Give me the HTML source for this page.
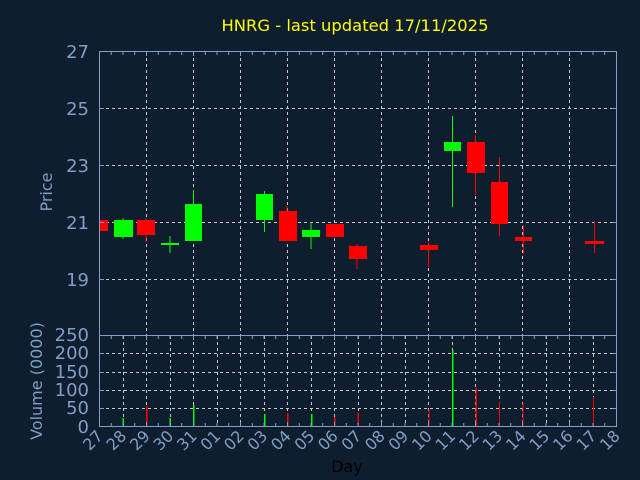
<!DOCTYPE html>
<html><head><meta charset="utf-8"><style>
html,body{margin:0;padding:0;background:#0f1e2f;}
svg{display:block;}
text{font-family:"DejaVu Sans","Liberation Sans",sans-serif;}
</style></head><body>
<svg width="640" height="480" viewBox="0 0 640 480" xmlns="http://www.w3.org/2000/svg">
<rect width="640" height="480" fill="#0f1e2f"/>
<text x="355" y="31" fill="#ffff00" font-size="16" text-anchor="middle" textLength="267" lengthAdjust="spacingAndGlyphs">HNRG - last updated 17/11/2025</text>
<g stroke="#c8c8c8" stroke-width="1" stroke-dasharray="3,3" fill="none">
<path d="M100 108.5H616M100 165.5H616M100 222.5H616M100 279.5H616"/>
<path d="M146.5 52V335M193.5 52V335M240.5 52V335M287.5 52V335M334.5 52V335M381.5 52V335M428.5 52V335M475.5 52V335M522.5 52V335M569.5 52V335"/>
<path d="M100 353.5H616M100 372.5H616M100 390.5H616M100 408.5H616"/>
<path d="M123.5 336V427M146.5 336V427M170.5 336V427M193.5 336V427M217.5 336V427M240.5 336V427M264.5 336V427M287.5 336V427M311.5 336V427M334.5 336V427M358.5 336V427M381.5 336V427M405.5 336V427M428.5 336V427M452.5 336V427M475.5 336V427M499.5 336V427M522.5 336V427M546.5 336V427M569.5 336V427M593.5 336V427"/>
</g>
<g fill="#ff0000" stroke="none">
<rect x="100" y="220" width="8" height="11"/>
<rect x="137" y="220" width="18" height="15"/><rect x="145.5" y="218" width="1" height="24"/>
<rect x="279" y="211" width="18" height="30"/><rect x="286.5" y="206" width="1" height="35"/>
<rect x="326" y="224" width="18" height="13"/>
<rect x="349" y="246" width="18" height="13"/><rect x="356.5" y="244" width="1" height="25"/>
<rect x="420" y="245" width="18" height="5"/><rect x="428" y="242" width="1" height="25"/>
<rect x="467" y="142" width="18" height="31"/><rect x="475" y="135" width="1" height="60"/>
<rect x="491" y="182" width="17" height="42"/><rect x="499" y="157" width="1" height="79"/>
<rect x="515" y="237" width="17" height="4"/><rect x="523" y="225" width="1" height="29"/>
<rect x="585" y="241" width="19" height="3"/><rect x="594" y="221" width="1" height="32"/>
</g>
<g fill="#00ff00" stroke="none">
<rect x="114" y="220" width="19" height="17"/><rect x="122.5" y="218" width="1" height="21"/>
<rect x="161" y="243" width="18" height="2"/><rect x="169.5" y="236" width="1" height="17"/>
<rect x="185" y="204" width="17" height="37"/><rect x="193" y="190" width="1" height="14"/>
<rect x="256" y="194" width="17" height="26"/><rect x="264" y="191" width="1" height="41"/>
<rect x="302" y="230" width="18" height="7"/><rect x="310.5" y="222" width="1" height="27"/>
<rect x="444" y="142" width="17" height="9"/><rect x="452" y="116" width="1" height="91"/>
</g>
<g stroke="none">
<rect x="122.5" y="418" width="1.5" height="9" fill="#00ff00"/>
<rect x="146" y="406" width="1.5" height="21" fill="#ff0000"/>
<rect x="169.5" y="418" width="1.5" height="9" fill="#00ff00"/>
<rect x="193" y="405" width="1.5" height="22" fill="#00ff00"/>
<rect x="264" y="414" width="1.5" height="13" fill="#00ff00"/>
<rect x="287" y="413" width="1.5" height="14" fill="#ff0000"/>
<rect x="311" y="414" width="1.5" height="13" fill="#00ff00"/>
<rect x="334" y="417" width="1.5" height="10" fill="#ff0000"/>
<rect x="357.5" y="413" width="1.5" height="14" fill="#ff0000"/>
<rect x="428.5" y="409" width="1" height="18" fill="#ff0000"/>
<rect x="452" y="350" width="1.5" height="77" fill="#00ff00"/>
<rect x="475.5" y="388" width="1.5" height="39" fill="#ff0000"/>
<rect x="499" y="402" width="1" height="25" fill="#ff0000"/>
<rect x="522.5" y="403" width="1" height="24" fill="#ff0000"/>
<rect x="593" y="397" width="1" height="30" fill="#ff0000"/>
</g>
<g stroke="#7f9fc7" stroke-width="1" fill="none">
<rect x="99.5" y="51.5" width="517" height="375"/>
<path d="M99.5 335.5H616.5"/>
<path id="tk" d="M111.25 52v3M123 52v3M134.75 52v3M146.5 52v4M158.25 52v3M170 52v3M181.75 52v3M193.5 52v4M205.25 52v3M217 52v3M228.75 52v3M240.5 52v4M252.25 52v3M264 52v3M275.75 52v3M287.5 52v4M299.25 52v3M311 52v3M322.75 52v3M334.5 52v4M346.25 52v3M358 52v3M369.75 52v3M381.5 52v4M393.25 52v3M405 52v3M416.75 52v3M428.5 52v4M440.25 52v3M452 52v3M463.75 52v3M475.5 52v4M487.25 52v3M499 52v3M510.75 52v3M522.5 52v4M534.25 52v3M546 52v3M557.75 52v3M569.5 52v4M581.25 52v3M593 52v3M604.75 52v3"/>
<use href="#tk" y="284"/>
<use href="#tk" transform="translate(0,478) scale(1,-1)" />
<path d="M99 108.5h5M99 165.5h5M99 222.5h5M99 279.5h5M612 108.5h4M612 165.5h4M612 222.5h4M612 279.5h4M99 353.5h5M99 372.5h5M99 390.5h5M99 408.5h5M612 353.5h4M612 372.5h4M612 390.5h4M612 408.5h4"/>
</g>
<g fill="#7f9fc7" font-size="18" text-anchor="end">
<text x="89" y="58">27</text><text x="89" y="115">25</text><text x="89" y="172">23</text><text x="89" y="229">21</text><text x="89" y="286">19</text>
<text x="89" y="341">250</text><text x="89" y="359">200</text><text x="89" y="378">150</text><text x="89" y="396">100</text><text x="89" y="414">50</text><text x="89" y="433">0</text>
</g>
<g fill="#7f9fc7" font-size="16" text-anchor="middle">
<text transform="translate(52,192) rotate(-90)">Price</text>
<text transform="translate(42,381) rotate(-90)">Volume (0000)</text>
</g>
<g fill="#7f9fc7" font-size="16" text-anchor="end">
<text transform="translate(104,437) rotate(-45)">27</text>
<text transform="translate(127.5,437) rotate(-45)">28</text>
<text transform="translate(151,437) rotate(-45)">29</text>
<text transform="translate(174.5,437) rotate(-45)">30</text>
<text transform="translate(198,437) rotate(-45)">31</text>
<text transform="translate(221.5,437) rotate(-45)">01</text>
<text transform="translate(245,437) rotate(-45)">02</text>
<text transform="translate(268.5,437) rotate(-45)">03</text>
<text transform="translate(292,437) rotate(-45)">04</text>
<text transform="translate(315.5,437) rotate(-45)">05</text>
<text transform="translate(339,437) rotate(-45)">06</text>
<text transform="translate(362.5,437) rotate(-45)">07</text>
<text transform="translate(386,437) rotate(-45)">08</text>
<text transform="translate(409.5,437) rotate(-45)">09</text>
<text transform="translate(433,437) rotate(-45)">10</text>
<text transform="translate(456.5,437) rotate(-45)">11</text>
<text transform="translate(480,437) rotate(-45)">12</text>
<text transform="translate(503.5,437) rotate(-45)">13</text>
<text transform="translate(527,437) rotate(-45)">14</text>
<text transform="translate(550.5,437) rotate(-45)">15</text>
<text transform="translate(574,437) rotate(-45)">16</text>
<text transform="translate(597.5,437) rotate(-45)">17</text>
<text transform="translate(621,437) rotate(-45)">18</text>
</g>
<text x="347" y="472" fill="#000000" font-size="16" text-anchor="middle">Day</text>
</svg>
</body></html>
